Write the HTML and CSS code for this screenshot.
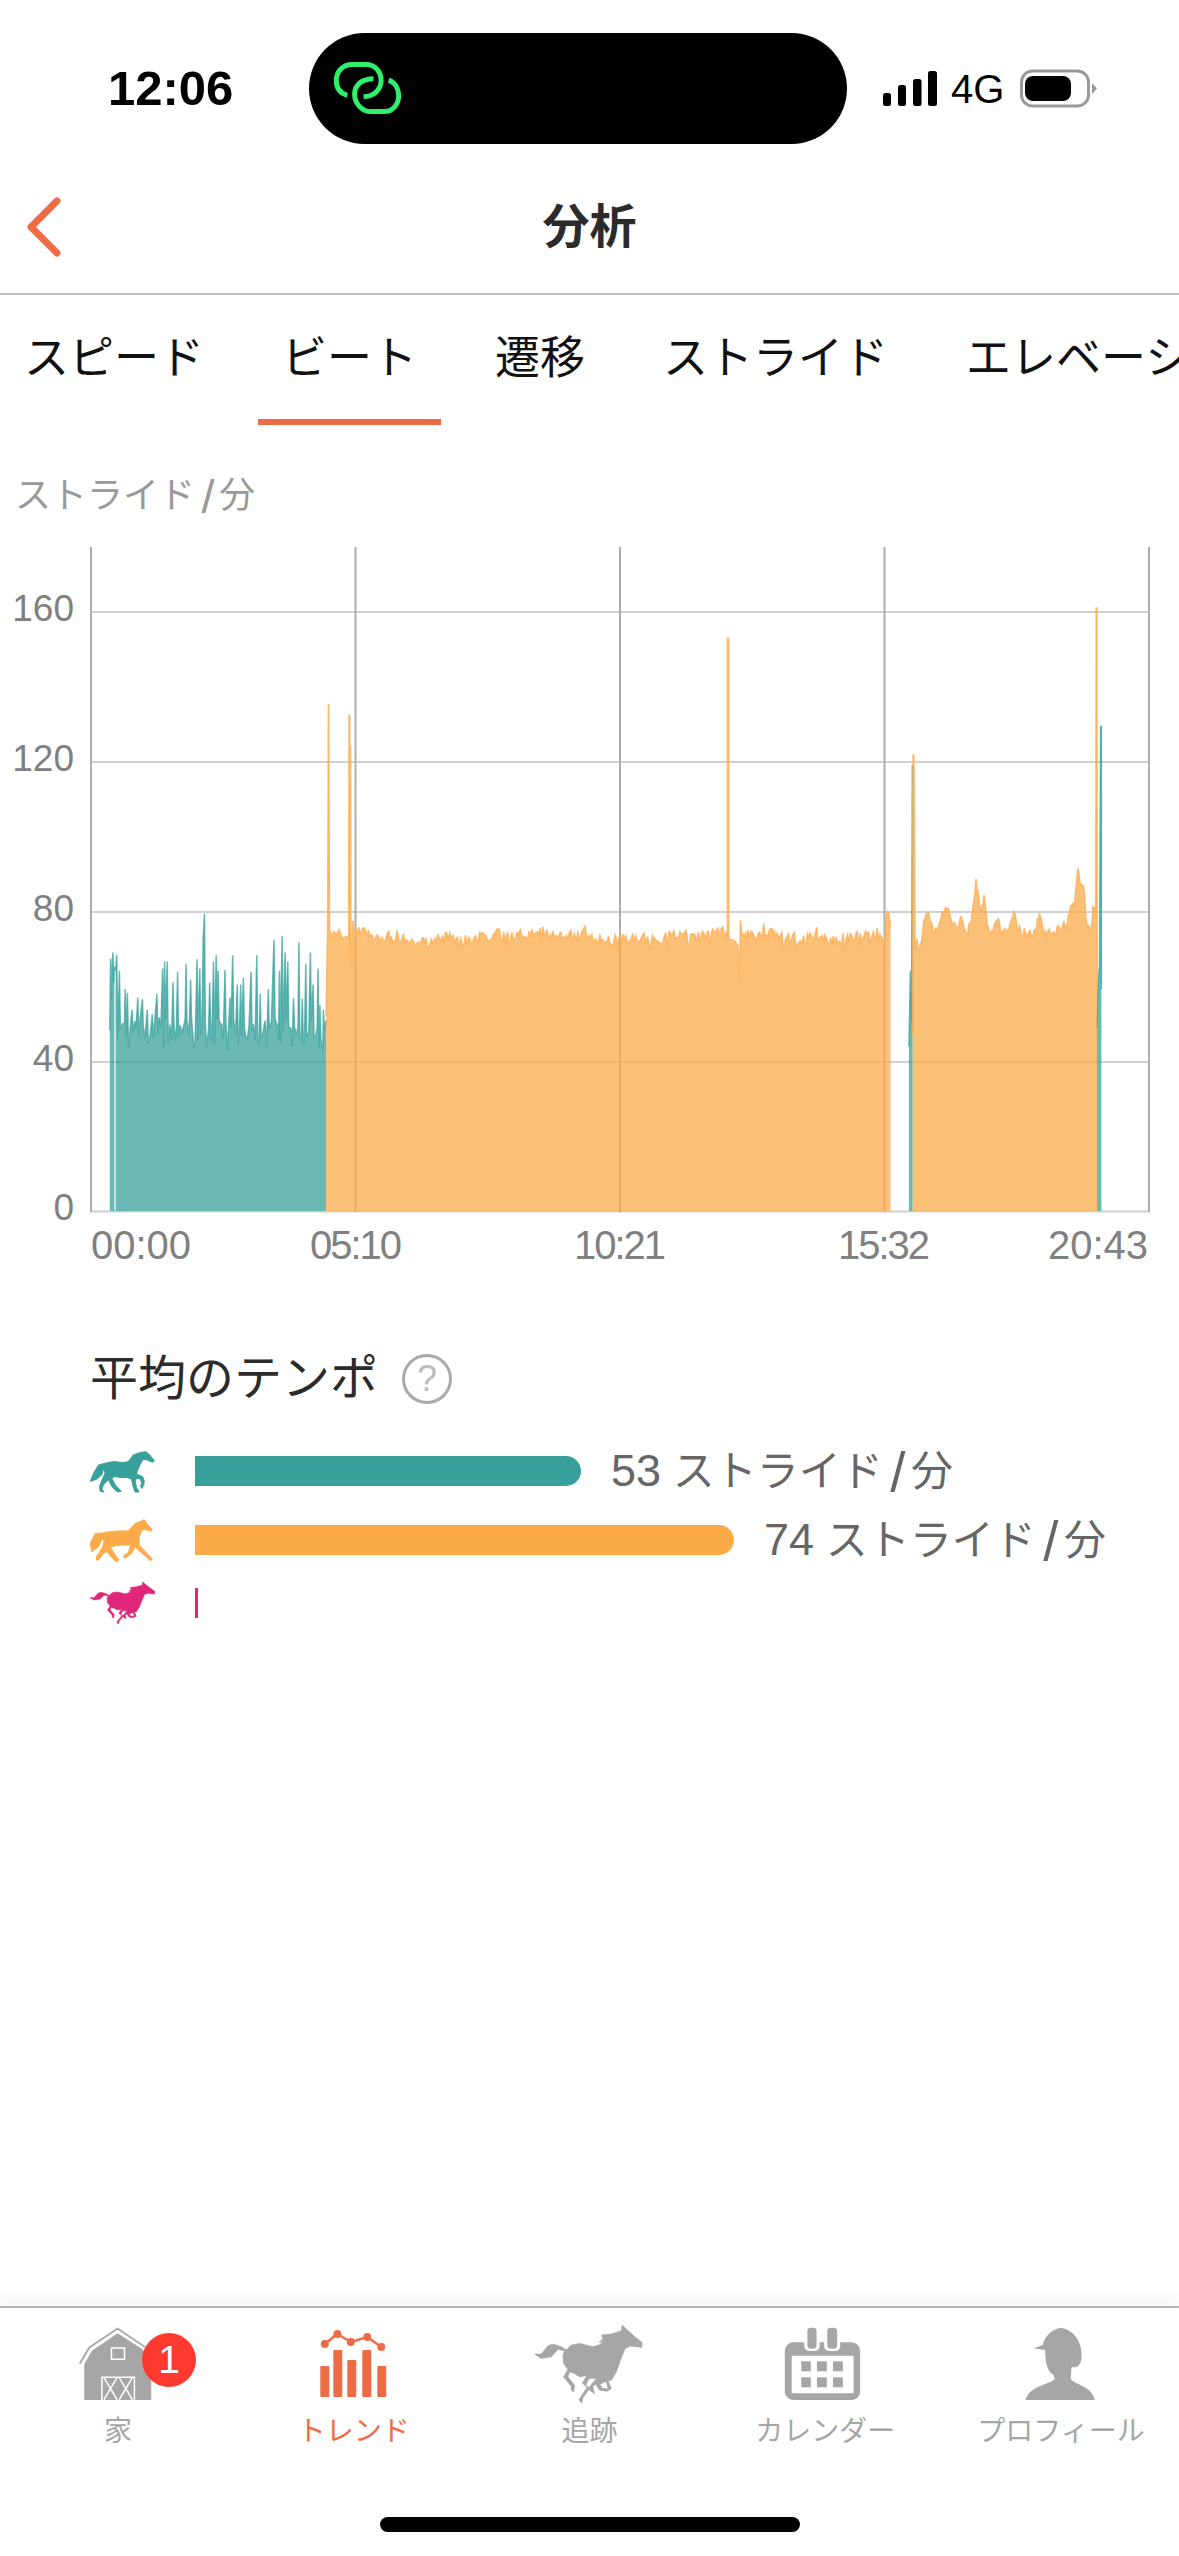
FILE: index.html
```html
<!DOCTYPE html>
<html lang="ja">
<head>
<meta charset="utf-8">
<title>分析</title>
<link rel="stylesheet" href="styles.css">
</head>
<body>
<div class="page">
  <header class="status">
    <div class="status-time">12:06</div>
    <div class="island">
      <svg class="island-icon" viewBox="100 125 205 165" width="68" height="55" fill="none" stroke="#2ff06c" stroke-width="15">
        <path d="M143 228C120 222 110 205 110 183C110 155 130 135 158 135L200 135C228 135 245 158 245 183C245 212 222 232 192 232"/>
        <path d="M222 178C190 178 165 195 165 225C165 255 190 277 215 277L255 277C280 277 298 255 298 230C298 205 285 188 268 182"/>
      </svg>
    </div>
    <svg class="status-signal" viewBox="883 70 54 35" width="54" height="35" fill="#000">
      <rect x="883" y="92" width="8" height="13" rx="2.5"/>
      <rect x="898" y="84" width="8" height="21" rx="2.5"/>
      <rect x="913" y="78" width="8.500" height="27" rx="2.5"/>
      <rect x="928" y="70" width="9" height="35" rx="2.5"/>
    </svg>
    <div class="status-net">4G</div>
    <svg class="status-battery" viewBox="1020 68 77 39" width="77" height="39">
      <rect x="1021.500" y="70" width="67" height="35" rx="11" fill="#fff" stroke="#999" stroke-width="3"/>
      <rect x="1025" y="75" width="46" height="25" rx="8" fill="#000"/>
      <path d="M1092 82L1097 87.500L1092 93Z" fill="#999"/>
    </svg>
  </header>

  <nav class="nav">
    <svg class="nav-back" viewBox="24 194 40 66" width="40" height="66" fill="none" stroke="#ee6c45" stroke-width="7" stroke-linecap="round" stroke-linejoin="round">
      <path d="M57 201L31 227L57 253"/>
    </svg>
    <h1 class="nav-title">分析</h1>
  </nav>

  <div class="tabs">
    <div class="tab">スピード</div>
    <div class="tab tab-active">ビート</div>
    <div class="tab">遷移</div>
    <div class="tab">ストライド</div>
    <div class="tab">エレベーション</div>
  </div>

  <div class="unit">ストライド<span class="slash">/</span>分</div>

  <svg class="chart" id="chart" viewBox="0 520 1179 760" width="1179" height="760">
    <g class="grid-h">
      <line x1="91" x2="1150" y1="612" y2="612"/>
      <line x1="91" x2="1150" y1="762" y2="762"/>
      <line x1="91" x2="1150" y1="912" y2="912"/>
      <line x1="91" x2="1150" y1="1062" y2="1062"/>
      <line x1="91" x2="1150" y1="1211.500" y2="1211.500"/>
    </g>
    <g class="grid-v">
      <line x1="91" x2="91" y1="547" y2="1212"/>
      <line x1="355.500" x2="355.500" y1="547" y2="1212"/>
      <line x1="620" x2="620" y1="547" y2="1212"/>
      <line x1="884.500" x2="884.500" y1="547" y2="1212"/>
      <line x1="1149" x2="1149" y1="547" y2="1212"/>
    </g>
    <g id="series"></g>
    <g class="tick tick-y">
      <text x="74" y="621">160</text>
      <text x="74" y="771">120</text>
      <text x="74" y="921">80</text>
      <text x="74" y="1071">40</text>
      <text x="74" y="1220">0</text>
    </g>
    <g class="tick tick-x">
      <text x="91" y="1259">00:00</text>
      <text class="tick-narrow" x="310" y="1259">05:10</text>
      <text class="tick-narrow" x="574" y="1259">10:21</text>
      <text class="tick-narrow" x="838" y="1259">15:32</text>
      <text x="1048" y="1259">20:43</text>
    </g>
  </svg>

  <section class="tempo">
    <div class="tempo-head">
      <h2 class="tempo-title">平均のテンポ</h2>
      <span class="help">?</span>
    </div>

    <svg class="defs" width="0" height="0">
      <defs>
        <path id="gallop" d="M367 45L385 62L405 80L428 98L426 112L392 108L376 115L362 150L350 185L335 210L325 212L335 235L322 243L300 240L288 222L280 228L284 250L268 238L250 262L246 278L238 268L262 232L248 218L262 196L240 200L225 190L210 185L205 200L225 225L222 245L215 240L215 228L192 200L205 178L192 160L190 135L195 122L175 118L155 140L125 145L105 132L125 132L145 108L160 102L185 110L200 120L215 105L240 100L280 110L300 104L312 92L298 98L310 85L305 75L335 72L365 62ZM290 205L268 205L258 225L268 232ZM300 222L308 234L325 236L320 214Z" fill-rule="evenodd"/>
      </defs>
    </svg>

    <div class="tempo-row tempo-row-first">
      <svg class="horse horse-walk" viewBox="90 60 195 130" width="65" height="43">
        <path d="M258 65L270 75L284 93L278 97L262 90L250 88L240 105L232 125L230 133L248 140L253 152L252 165L246 176L242 170L246 160L240 146L228 147L226 156L230 174L238 187L225 187L218 165L215 148L200 143L180 143L165 140L155 145L165 165L184 185L172 187L155 170L145 150L130 165L125 178L132 187L120 185L118 170L128 145L135 130L131 116L125 135L110 148L90 155L100 130L115 105L135 100L160 95L190 98L205 95L220 75L240 68Z"/>
      </svg>
      <div class="bar bar-walk" style="width:386px"></div>
      <div class="value"><span class="num">53</span> ストライド<span class="slash">/</span>分</div>
    </div>

    <div class="tempo-row">
      <svg class="horse horse-trot" viewBox="90 266 195 130" width="65" height="43">
        <path d="M253 268L262 282L277 296L274 303L255 298L246 300L238 320L238 345L278 388L272 392L225 350L215 370L195 385L190 378L205 368L212 345L180 345L150 350L165 375L177 390L168 395L155 382L140 365L130 370L115 390L108 390L110 378L125 355L132 335L126 325L115 350L95 365L90 340L105 310L128 308L145 305L175 302L205 302L225 280L245 272Z"/>
      </svg>
      <div class="bar bar-trot" style="width:539px"></div>
      <div class="value"><span class="num">74</span> ストライド<span class="slash">/</span>分</div>
    </div>

    <div class="tempo-row">
      <svg class="horse horse-gallop" viewBox="105 45 323 233" width="65" height="42" preserveAspectRatio="none">
        <use href="#gallop"/>
      </svg>
      <div class="bar bar-gallop" style="width:3px"></div>
    </div>
  </section>

  <footer class="tabbar">
    <div class="tabbar-row">
      <div class="tabbar-item">
        <svg class="tabbar-icon" viewBox="37.900 2325 160 80" width="160" height="80">
          <g transform="translate(0 2290) scale(.3827 .3333)">
            <path class="ico" d="M220 330L220 222L240 182L307 130L372 178L395 215L395 330Z"/>
            <path class="ico-line" d="M208 222L233 173L307 116L380 172"/>
            <g class="ico-cut">
              <rect x="291" y="174" width="34" height="34"/>
              <path d="M266 330V262H351V330M271 262L306 330M306 262L271 330M311 262L346 330M346 262L311 330"/>
            </g>
          </g>
        </svg>
        <div class="tabbar-label">家</div>
        <div class="badge">1</div>
      </div>

      <div class="tabbar-item tabbar-item-active">
        <svg class="tabbar-icon" viewBox="273.700 2325 160 80" width="160" height="80">
          <g class="ico-active">
            <rect x="320" y="2366" width="9" height="31" rx="1"/>
            <rect x="333" y="2350" width="9" height="47" rx="1"/>
            <rect x="347" y="2360" width="9" height="37" rx="1"/>
            <rect x="362" y="2350" width="9" height="47" rx="1"/>
            <rect x="377" y="2366" width="9" height="31" rx="1"/>
            <circle cx="324.500" cy="2344" r="4"/>
            <circle cx="337" cy="2334" r="4"/>
            <circle cx="350.500" cy="2342" r="4"/>
            <circle cx="367" cy="2337" r="4"/>
            <circle cx="381" cy="2347" r="4"/>
            <path class="ico-active-line" d="M324.500 2344L337 2334L350.500 2342L367 2337L381 2347"/>
          </g>
        </svg>
        <div class="tabbar-label">トレンド</div>
      </div>

      <div class="tabbar-item">
        <svg class="tabbar-icon" viewBox="509.500 2325 160 80" width="160" height="80">
          <svg x="535" y="2325" width="108" height="78" viewBox="105 45 323 233" preserveAspectRatio="none">
            <use href="#gallop" class="ico ico-horse"/>
          </svg>
        </svg>
        <div class="tabbar-label">追跡</div>
      </div>

      <div class="tabbar-item">
        <svg class="tabbar-icon" viewBox="745.300 2325 160 80" width="160" height="80">
          <g transform="translate(580 2290) scale(.382 .3333)">
            <rect class="ico" x="537" y="157" width="197" height="173" rx="24" ry="24"/>
            <rect class="ico-white" x="555" y="197" width="162" height="113" rx="4"/>
            <rect class="ico-white" x="588" y="113" width="40" height="70" rx="14"/>
            <rect class="ico-white" x="640" y="113" width="42" height="70" rx="14"/>
            <rect class="ico" x="596" y="113" width="24" height="63" rx="10"/>
            <rect class="ico" x="648" y="113" width="26" height="63" rx="10"/>
            <rect class="ico" x="580" y="214" width="25" height="30"/>
            <rect class="ico" x="621" y="214" width="26" height="30"/>
            <rect class="ico" x="663" y="214" width="26" height="30"/>
            <rect class="ico" x="580" y="262" width="25" height="30"/>
            <rect class="ico" x="621" y="262" width="26" height="30"/>
            <rect class="ico" x="663" y="262" width="26" height="30"/>
          </g>
        </svg>
        <div class="tabbar-label">カレンダー</div>
      </div>

      <div class="tabbar-item">
        <svg class="tabbar-icon" viewBox="981.100 2325 160 80" width="160" height="80">
          <g transform="translate(580 2290) scale(.382 .3333)">
            <path class="ico" d="M1258 113C1290 118 1312 150 1313 190C1315 215 1308 232 1295 232L1287 232L1285 265C1290 285 1340 285 1348 330L1167 330C1175 290 1225 285 1243 268L1240 255C1225 245 1218 225 1218 180L1188 175L1212 165C1215 140 1235 118 1258 113Z"/>
          </g>
        </svg>
        <div class="tabbar-label">プロフィール</div>
      </div>
    </div>
    <div class="home-indicator"></div>
  </footer>
</div>
<script src="chart.js"></script>
</body>
</html>
```

FILE: styles.css
```css
* {
  box-sizing: border-box;
}

html,
body {
  margin: 0;
  padding: 0;
  background: #fff;
}

.page {
  width: 1179px;
  height: 2556px;
  display: flex;
  flex-direction: column;
  overflow: hidden;
  background: #fff;
  font-family: "Liberation Sans", "Noto Sans CJK JP", sans-serif;
}

/* status bar */
.status {
  height: 160px;
  padding: 33px 0 16px 108px;
  display: flex;
  align-items: center;
  flex: none;
}

.status-time {
  width: 125px;
  margin-bottom: 2px;
  font-size: 49px;
  font-weight: 700;
  line-height: 56px;
  color: #000;
}

.island {
  margin-left: 76px;
  width: 538px;
  height: 111px;
  border-radius: 56px;
  background: #000;
  display: flex;
  align-items: center;
  padding-left: 24px;
}

.status-signal {
  margin-left: 36px;
  flex: none;
}

.status-net {
  margin-left: 14px;
  font-size: 40px;
  line-height: 44px;
  color: #000;
}

.status-battery {
  margin-left: 16px;
  flex: none;
}

/* navigation */
.nav {
  position: relative;
  height: 135px;
  flex: none;
  display: flex;
  align-items: center;
  justify-content: center;
  border-bottom: 2px solid #bdbdbd;
}

.nav-back {
  position: absolute;
  left: 24px;
  top: 34px;
}

.nav-title {
  margin: 0;
  font-size: 47px;
  line-height: 60px;
  font-weight: 700;
  color: #2b2b2b;
}

/* tabs */
.tabs {
  display: flex;
  gap: 30px;
  flex: none;
  overflow: hidden;
  white-space: nowrap;
}

.tab {
  flex: none;
  padding: 39px 24px 35px;
  border-bottom: 6px solid transparent;
  font-size: 45px;
  line-height: 50px;
  color: #111;
}

.tab-active {
  border-bottom-color: #ee6c45;
}

.unit {
  margin-top: 46px;
  padding-left: 15px;
  height: 49px;
  flex: none;
  font-size: 36px;
  line-height: 50px;
  color: #999;
}

.slash {
  font-size: 1.3em;
  line-height: 0;
  margin: 0 0.1em 0 0.14em;
  vertical-align: -0.1em;
}

/* chart */
.chart {
  display: block;
  flex: none;
}

.grid-h line {
  stroke: #d0d0d0;
  stroke-width: 2;
}

.grid-v line {
  stroke: #adadad;
  stroke-width: 2;
}

.tick text {
  fill: #808080;
  font-family: "Liberation Sans", sans-serif;
}

.tick-y text {
  font-size: 37px;
  text-anchor: end;
}

.tick-x text {
  font-size: 40px;
}

.tick-x .tick-narrow {
  letter-spacing: -2px;
}

.teal-fill {
  fill: #37a09a;
  fill-opacity: 0.74;
}

.teal-line {
  fill: none;
  stroke: #3aa39d;
  stroke-width: 1.5;
  stroke-opacity: 0.75;
}

.orange-fill {
  fill: #fbab48;
  fill-opacity: 0.75;
}

.orange-line {
  fill: none;
  stroke: #fdb25c;
  stroke-width: 1.5;
  stroke-opacity: 0.85;
}

/* average tempo */
.tempo {
  margin-top: 69px;
  flex: none;
}

.tempo-head {
  padding-left: 90px;
  height: 60px;
  display: flex;
  align-items: center;
  gap: 24px;
}

.tempo-title {
  margin: 0;
  font-size: 48px;
  line-height: 60px;
  font-weight: 400;
  color: #2b2b2b;
}

.help {
  width: 50px;
  height: 50px;
  border: 3px solid #aaa;
  border-radius: 50%;
  display: flex;
  align-items: center;
  justify-content: center;
  font-size: 36px;
  color: #bbb;
}

.defs {
  position: absolute;
}

.tempo-row {
  margin-bottom: 1px;
  padding-left: 90px;
  height: 62px;
  display: flex;
  align-items: center;
}

.tempo-head + .defs + .tempo-row {
  margin-top: 31px;
}

.tempo-row-first {
  margin-bottom: 7px;
}

.horse {
  flex: none;
  margin-right: 40px;
  stroke-width: 3;
}

.horse-walk {
  fill: #37a09a;
  stroke: #37a09a;
}

.horse-trot {
  fill: #fbab48;
  stroke: #fbab48;
}

.horse-gallop {
  fill: #e0267b;
  stroke: #e0267b;
}

.bar {
  flex: none;
  height: 30px;
  margin-right: 30px;
  border-radius: 0 15px 15px 0;
}

.bar-walk {
  background: #37a09a;
}

.bar-trot {
  background: #fbab48;
}

.bar-gallop {
  background: #e0267b;
  border-radius: 0;
}

.value {
  font-size: 42px;
  line-height: 50px;
  color: #666;
  white-space: nowrap;
}

.num {
  font-size: 1.07em;
}

/* bottom tab bar */
.tabbar {
  margin-top: auto;
  height: 250px;
  flex: none;
  border-top: 2px solid #b5b5b5;
  box-shadow: 0 -8px 14px rgba(0, 0, 0, 0.035);
  background: #fff;
  display: flex;
  flex-direction: column;
}

.tabbar-row {
  display: flex;
  padding-top: 17px;
}

.tabbar-item {
  position: relative;
  flex: 1 1 0;
  display: flex;
  flex-direction: column;
  align-items: center;
}

.tabbar-icon {
  display: block;
  overflow: visible;
}

.tabbar-label {
  margin-top: 9px;
  font-size: 28px;
  line-height: 36px;
  color: #a6a6a6;
  white-space: nowrap;
}

.tabbar-item-active .tabbar-label {
  color: #ee6c45;
}

.ico {
  fill: #a6a6a6;
}

.ico-horse {
  stroke: #a6a6a6;
  stroke-width: 2;
}

.ico-white {
  fill: #fff;
}

.ico-line {
  fill: none;
  stroke: #a6a6a6;
  stroke-width: 5;
}

.ico-cut {
  fill: none;
  stroke: #fff;
  stroke-width: 1.500;
}

.ico-cut * {
  vector-effect: non-scaling-stroke;
}

.ico-active {
  fill: #ee6c45;
}

.ico-active-line {
  fill: none;
  stroke: #ee6c45;
  stroke-width: 2.500;
}

.badge {
  position: absolute;
  left: 142px;
  top: 8px;
  width: 54px;
  height: 54px;
  border-radius: 50%;
  background: #ff3b30;
  color: #fff;
  font-size: 39px;
  line-height: 54px;
  text-align: center;
}

.home-indicator {
  width: 420px;
  height: 15px;
  margin: 67px auto 0;
  border-radius: 8px;
  background: #000;
}
```

FILE: chart.js
```js
(function () {
  var seed = 20430;
  function rnd() {
    seed |= 0;
    seed = (seed + 0x6d2b79f5) | 0;
    var t = Math.imul(seed ^ (seed >>> 15), 1 | seed);
    t = (t + Math.imul(t ^ (t >>> 7), 61 | t)) ^ t;
    return ((t ^ (t >>> 14)) >>> 0) / 4294967296;
  }
  function range(a, b) {
    return a + (b - a) * rnd();
  }

  var BASE = 1211;
  var left = function (x) { return x / 2.613; };
  var right = function (x) { return 580 + x / 2.618; };
  var yy = function (y) { return 530 + y / 2.178; };

  function toPage(list, fx) {
    return list.map(function (p) { return [fx(p[0]), yy(p[1])]; });
  }

  var host = document.getElementById("series");
  function add(cls, d) {
    var el = document.createElementNS("http://www.w3.org/2000/svg", "path");
    el.setAttribute("class", cls);
    el.setAttribute("d", d);
    host.appendChild(el);
  }
  function line(pts) {
    return pts.map(function (p, i) {
      return (i ? "L" : "M") + p[0].toFixed(1) + " " + p[1].toFixed(1);
    }).join("");
  }
  function area(pts, kind) {
    var first = pts[0], last = pts[pts.length - 1];
    add(kind + "-fill", "M" + first[0].toFixed(1) + " " + BASE + line(pts).replace("M", "L") + "L" + last[0].toFixed(1) + " " + BASE + "Z");
    add(kind + "-line", line(pts));
  }

  /* walk: first sliver */
  area(toPage([[287, 1090], [289, 933], [291, 1025], [293, 960], [295, 920], [297, 985], [299, 950]], left), "teal");

  /* walk: main block, spikes read off the reference */
  var spikes = [[305, 925], [312, 960], [327, 1000], [333, 1008], [345, 1045], [360, 1018], [372, 1022], [385, 1045], [398, 1055], [410, 1010], [425, 955], [430, 940], [437, 940], [452, 985], [464, 962], [486, 945], [498, 980], [515, 935], [522, 955], [531, 890], [534, 836], [548, 985], [558, 940], [565, 926], [570, 960], [588, 958], [601, 1018], [608, 926], [620, 990], [629, 990], [636, 975], [656, 962], [671, 926], [680, 1010], [701, 1000], [716, 893], [730, 960], [737, 885], [745, 920], [752, 940], [767, 1020], [781, 898], [790, 1020], [799, 945], [811, 920], [818, 990], [831, 955], [836, 1035], [845, 1045]];
  var teal = [[302, 960]];
  spikes.forEach(function (s, i) {
    teal.push(s);
    var next = spikes[i + 1] ? spikes[i + 1][0] : 852;
    var x = s[0] + 2.5;
    while (x < next - 1.5) {
      teal.push([x, range(1060, 1135)]);
      x += range(3, 6);
    }
  });
  teal.push([852, 1068]);
  area(toPage(teal, left), "teal");

  /* slivers of walk near the right */
  area(toPage([[861, 1125], [865, 960], [868, 1068], [870, 512], [871, 1100]], right), "teal");
  area(toPage([[1353, 1085], [1356, 985], [1360, 950], [1363, 428], [1365, 428], [1365, 1000]], right), "teal");

  /* trot: long block */
  function noisy(x0, x1, fx, top) {
    var out = [];
    var x = x0;
    while (x < x1) {
      var drift = 7 * Math.sin(x / 31) + 4 * Math.sin(x / 7.3);
      var y = top + drift + range(-13, 13);
      if (rnd() < 0.07) y += range(14, 34);
      if (rnd() < 0.05) y -= range(8, 18);
      out.push([fx(x), yy(y)]);
      x += range(1, 1.8);
    }
    return out;
  }
  var long = toPage([[852, 1060], [854, 960], [856, 880], [858, 380], [859, 380], [861, 870], [867, 885], [872, 875], [880, 880], [886, 870], [895, 890], [905, 885], [911, 890], [912, 404], [914, 404], [915, 920], [916, 470], [917, 935], [919, 960], [922, 850], [926, 880]], left);
  long = long.concat(noisy(355, 727, function (x) { return x; }, 886));
  long = long.concat(toPage([[386, 890], [386, 236], [389, 236], [389, 890], [405, 895], [413, 905], [417, 980], [419, 900], [420, 850], [424, 880]], right));
  long = long.concat(noisy(743, 886, function (x) { return x; }, 885));
  long = long.concat(toPage([[800, 850], [805, 830], [809, 835], [813, 865]], right));
  area(long, "orange");

  /* trot: short block */
  var anchors = [[871, 1100], [872, 490], [874, 490], [875, 530], [877, 915], [882, 890], [885, 915], [893, 905], [900, 850], [908, 838], [915, 845], [925, 880], [940, 860], [957, 820], [965, 825], [972, 850], [985, 865], [995, 845], [1015, 880], [1025, 845], [1037, 760], [1045, 810], [1050, 830], [1058, 795], [1066, 860], [1075, 880], [1092, 850], [1105, 880], [1120, 870], [1135, 830], [1148, 870], [1170, 880], [1190, 875], [1203, 835], [1215, 880], [1240, 875], [1275, 860], [1283, 825], [1295, 810], [1303, 737], [1310, 770], [1318, 775], [1328, 865], [1338, 870], [1343, 820], [1350, 820], [1351.500, 170], [1353.500, 170], [1354, 1000]];
  var short = [];
  anchors.forEach(function (a, i) {
    short.push(a);
    var b = anchors[i + 1];
    if (!b || b[0] - a[0] < 5 || i < 3) return;
    var x = a[0] + 3;
    while (x < b[0] - 1) {
      var t = (x - a[0]) / (b[0] - a[0]);
      short.push([x, a[1] + (b[1] - a[1]) * t + range(-11, 11)]);
      x += range(2, 3.5);
    }
  });
  area(toPage(short, right), "orange");
})();
```
